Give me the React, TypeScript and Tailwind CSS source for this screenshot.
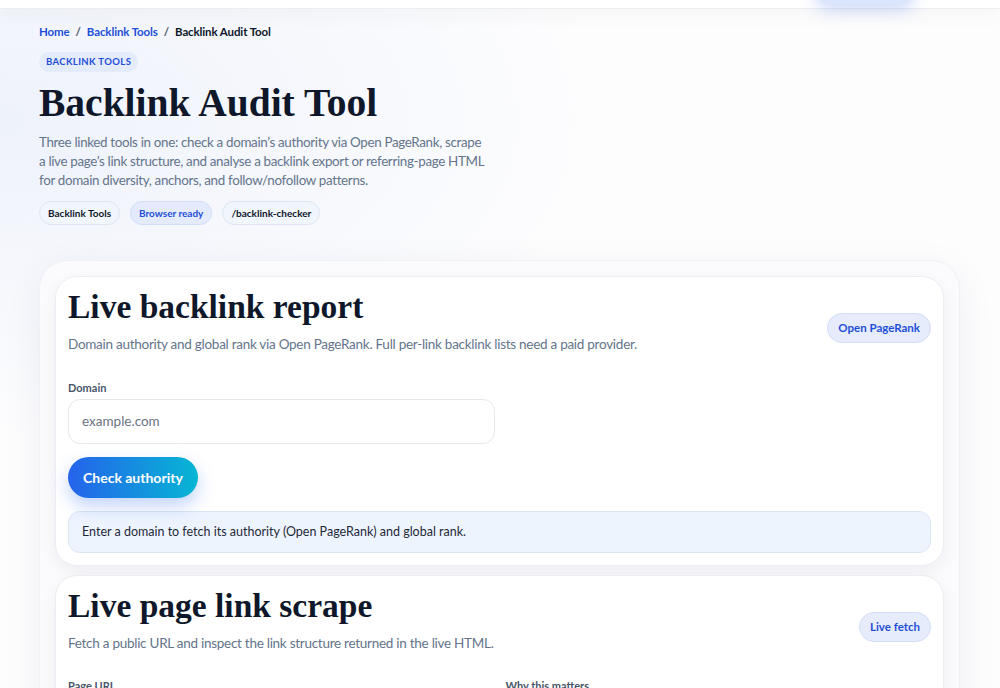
import React from "react";

const serif = { fontFamily: '"Liberation Serif", "DejaVu Serif", serif' };

function Pill({ children, tone = "plain" }: { children: React.ReactNode; tone?: "plain" | "blue" }) {
  const cls =
    tone === "blue"
      ? "bg-[#e4ebfc] border-[#d2ddf7] text-[#1f4fd6]"
      : "bg-[#f1f5fc] border-[#dfe6f2] text-[#0f172a]";
  return (
    <span className={`inline-flex h-6 items-center rounded-full border px-[8px] text-[10px] font-bold ${cls}`}>
      {children}
    </span>
  );
}

function ToolCard({
  title,
  desc,
  badge,
  children,
}: {
  title: string;
  desc: string;
  badge: string;
  children?: React.ReactNode;
}) {
  return (
    <section className="rounded-[22px] border border-[#eceef3] bg-white px-3 pt-[10px] pb-3 shadow-[0_6px_16px_rgba(30,41,80,0.06)]">
      <div className="flex items-center justify-between">
        <div>
          <h2 className="text-[33.5px] leading-[40px] font-bold text-[#0f172a]" style={serif}>
            {title}
          </h2>
          <p className="mt-[7px] text-[13.5px] tracking-[-0.02em] text-[#64748b]">{desc}</p>
        </div>
        <span className="mt-[14px] inline-flex h-[30px] items-center rounded-full border border-[#d3ddf5] bg-[#e6ecfb] px-[10px] text-[11.5px] font-bold text-[#1f4fd6]">
          {badge}
        </span>
      </div>
      {children}
    </section>
  );
}

export default function App() {
  return (
    <div
      className="min-h-[688px] bg-[#fdfdfe] bg-[radial-gradient(ellipse_600px_320px_at_0px_120px,#eef2fb,transparent)] text-[#0f172a]"
      style={{ fontFamily: 'Lato, "Noto Sans", sans-serif' }}
    >
      {/* top nav, scrolled mostly out of view */}
      <header className="relative h-[9px] border-b border-[#ebedf1] bg-white shadow-[0_6px_18px_rgba(15,23,42,0.05)]">
        <div className="absolute right-[85px] bottom-[4px] h-8 w-[100px] rounded-full bg-[#dbe5fd] shadow-[0_6px_16px_rgba(59,108,245,0.25)]" />
      </header>

      <main className="px-[39px]">
        <nav className="mt-[14px] flex items-center gap-[6px] text-[11.5px] font-bold tracking-[-0.01em]">
          <span className="text-[#1f4fd6]">Home</span>
          <span className="text-[#475569]">/</span>
          <span className="text-[#1f4fd6]">Backlink Tools</span>
          <span className="text-[#475569]">/</span>
          <span className="text-[#0f172a]">Backlink Audit Tool</span>
        </nav>

        <span className="mt-[12px] inline-flex h-5 items-center rounded-full bg-[#e4ebfb] px-[7px] text-[9.5px] font-bold tracking-[0.04em] text-[#1f4fd6]">
          BACKLINK TOOLS
        </span>

        <h1 className="mt-[8px] text-[39.5px] leading-[46px] font-bold text-[#0f172a]" style={serif}>
          Backlink Audit Tool
        </h1>

        <p className="mt-[7px] max-w-[465px] text-[13.4px] leading-[19px] tracking-[-0.025em] text-[#64748b]">
          Three linked tools in one: check a domain’s authority via Open PageRank, scrape
          <br />a live page’s link structure, and analyse a backlink export or referring-page HTML
          <br />for domain diversity, anchors, and follow/nofollow patterns.
        </p>

        <div className="mt-[11px] flex gap-[10px]">
          <Pill>Backlink Tools</Pill>
          <Pill tone="blue">Browser ready</Pill>
          <Pill>/backlink-checker</Pill>
        </div>

        <div className="mt-[35px] w-[921px] rounded-[28px] border border-[#eef0f4] bg-[#fbfbfd] p-[15px] shadow-[0_10px_40px_rgba(30,41,80,0.06)]">
          <div className="flex flex-col gap-[9px]">
            <ToolCard
              title="Live backlink report"
              desc="Domain authority and global rank via Open PageRank. Full per-link backlink lists need a paid provider."
              badge="Open PageRank"
            >
              <label className="mt-[25px] block text-[11px] font-bold text-[#475569]">Domain</label>
              <div className="mt-[3px] flex h-[45px] w-[427px] items-center rounded-[12px] border border-[#e6e8ee] bg-white px-[13px] text-[13.5px] text-[#6b7280]">
                example.com
              </div>
              <button className="mt-[13px] h-[41px] rounded-full bg-[linear-gradient(90deg,#2563eb,#06b6d4)] px-[15px] text-[14px] font-bold text-white shadow-[0_8px_18px_rgba(37,99,235,0.28)]">
                Check authority
              </button>
              <div className="mt-[13px] flex h-[42px] items-center rounded-[12px] border border-[#dbe5f6] bg-[#eef4fe] px-[13px] text-[12.5px] text-[#1e293b]">
                Enter a domain to fetch its authority (Open PageRank) and global rank.
              </div>
            </ToolCard>

            <ToolCard
              title="Live page link scrape"
              desc="Fetch a public URL and inspect the link structure returned in the live HTML."
              badge="Live fetch"
            >
              <div className="mt-[25px] grid grid-cols-2 gap-3 text-[11px] font-bold text-[#475569]">
                <span>Page URL</span>
                <span>Why this matters</span>
              </div>
              <div className="h-[120px]" />
            </ToolCard>
          </div>
        </div>
      </main>
    </div>
  );
}
